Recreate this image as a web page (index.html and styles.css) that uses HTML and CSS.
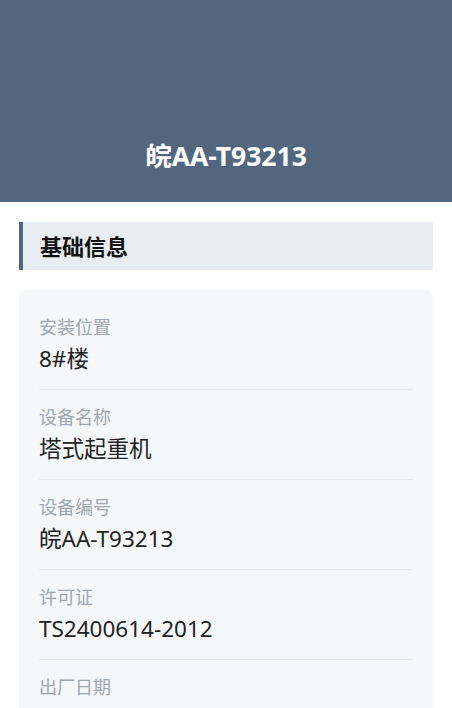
FILE: index.html
```html
<!DOCTYPE html>
<html lang="zh-CN">
<head>
    <meta charset="UTF-8">
    <meta name="viewport" content="width=device-width, initial-scale=1.0">
    <title>设备详情</title>
    <link rel="stylesheet" href="styles.css">
</head>
<body>
    <div class="header">
        <h1 class="plate">皖AA-T93213</h1>
    </div>

    <div class="section-title">基础信息</div>

    <div class="info-card">
        <div class="info-item">
            <div class="info-label">安装位置</div>
            <div class="info-value">8#楼</div>
        </div>
        <div class="info-item">
            <div class="info-label">设备名称</div>
            <div class="info-value">塔式起重机</div>
        </div>
        <div class="info-item">
            <div class="info-label">设备编号</div>
            <div class="info-value">皖AA-T93213</div>
        </div>
        <div class="info-item">
            <div class="info-label">许可证</div>
            <div class="info-value">TS2400614-2012</div>
        </div>
        <div class="info-item">
            <div class="info-label">出厂日期</div>
            <div class="info-value">2012-06-14</div>
        </div>
    </div>
</body>
</html>
```

FILE: styles.css
```css
body {
    margin: 0;
    background-color: #ffffff;
    font-family: "Noto Sans", "Noto Sans CJK SC", sans-serif;
    color: #222222;
}
.header {
    height: 202px;
    background-color: #52677f;
    display: flex;
    align-items: flex-end;
    justify-content: center;
    box-sizing: border-box;
    padding-bottom: 29px;
}
.plate {
    margin: 0;
    color: #ffffff;
    font-size: 26.5px;
    line-height: 34px;
    font-weight: bold;
}
.section-title {
    margin: 20px 19px 0 19px;
    height: 48px;
    line-height: 48px;
    background-color: #e9edf1;
    border-left: 4px solid #52677f;
    padding-left: 17px;
    font-size: 22px;
    font-weight: bold;
    color: #111111;
}
.info-card {
    margin: 20px 19px 0 19px;
    background-color: #f5f7f9;
    border-radius: 8px;
    padding: 10px 20px;
}
.info-item {
    padding: 16px 0 15px 0;
    border-bottom: 1px solid #e8ebee;
}
.info-label {
    font-size: 18px;
    line-height: 22px;
    color: #a0a7b0;
}
.info-value {
    margin-top: 6px;
    font-size: 22.5px;
    line-height: 30px;
    color: #222222;
}
```
